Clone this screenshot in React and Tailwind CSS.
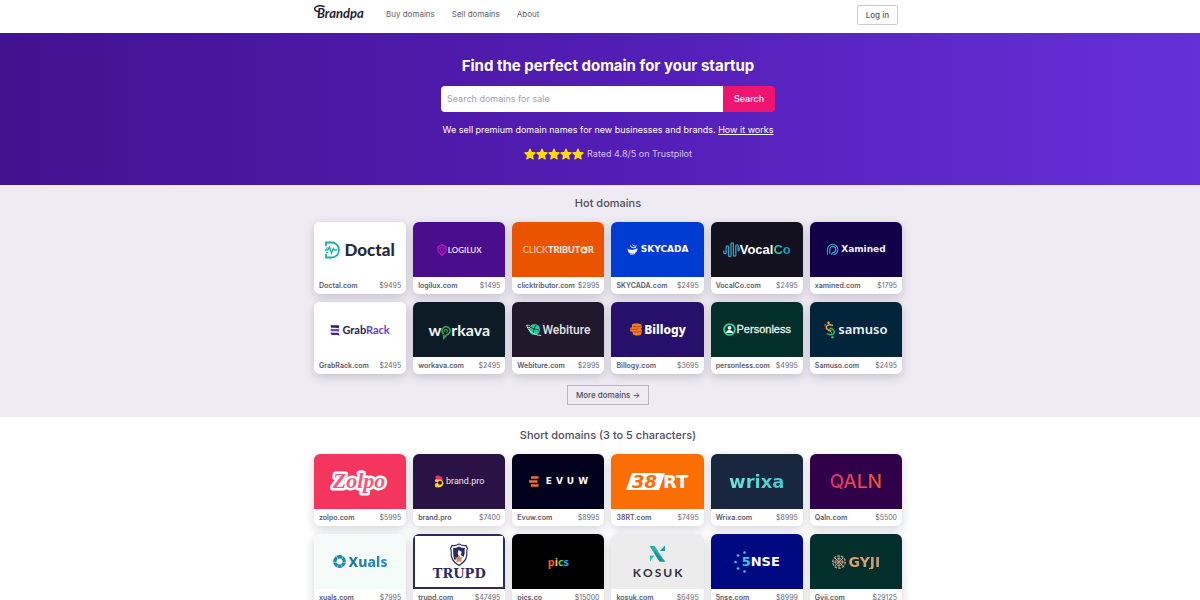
import React from "react";

const container = "mx-auto w-full max-w-[604px] pl-4";

function Star() {
  return (
    <svg viewBox="0 0 24 24" className="size-3" fill="#ffdb0f" stroke="#ffdb0f" strokeWidth="2.2" strokeLinejoin="round" aria-hidden="true">
      <path d="M12 2l3 6.800 7.400.8-5.500 5 1.500 7.300L12 18.200l-6.400 3.700 1.500-7.300-5.500-5 7.400-.8z" />
    </svg>
  );
}

const logos = {
  doctal: (
    <div className="flex items-center gap-[3px]">
      <svg viewBox="0 0 16 18" className="h-[18px] w-4" fill="none" stroke="#1bb0a6" strokeWidth="1.800">
        <path d="M1 5V1.500h5.500a7.500 7.500 0 0 1 0 15H1V13" />
        <path d="M0 9h3l1.500-3 2 6 1.800-4.500 1 1.500H12" strokeWidth="1.300" />
        <path d="M1 7h3M1 11.500h2" strokeWidth="1" />
      </svg>
      <span className="font-['Lato',sans-serif] text-[17px] font-black text-[#262a3c]">Doctal</span>
    </div>
  ),
  logilux: (
    <div className="flex items-center gap-px">
      <svg viewBox="0 0 10 12" className="h-3 w-[10px]" fill="none" stroke="#b31bb4" strokeWidth="1.300">
        <path d="M5 .7l4 2.200v4.400L5 11.300 1 7.300V2.900z" />
        <path d="M3 4l2-1.300L7 4v2.500L5 8 3 6.500zM5 4.500v2M1.500 3.500l2 1M8.500 3.500l-2 1M5 8v3" strokeWidth=".9" />
      </svg>
      <span className="font-['Lato',sans-serif] text-[8px] font-bold text-[#e6d9f5]">LOGILUX</span>
    </div>
  ),
  clicktributor: (
    <div className="flex items-center font-['Lato',sans-serif] text-[9px] text-[#fff0dc]">
      <span className="text-[#ffd9ae]">CLICK</span>
      <span className="font-black">TRIBUT</span>
      <svg viewBox="0 0 8 8" className="size-2" fill="none" stroke="#fff0dc" strokeWidth="1.800">
        <circle cx="4" cy="4" r="2.600" />
        <path d="M3.500 3.500L7.500 0 7 4" fill="#fff0dc" stroke="none" />
      </svg>
      <span className="font-black">R</span>
    </div>
  ),
  skycada: (
    <div className="flex items-center gap-[3px]">
      <svg viewBox="0 0 11 11" className="size-[11px]" fill="none" stroke="#fff" strokeWidth="1">
        <path d="M.5 4.200c1.500 2 5.500 2.200 10 0a5.200 5.200 0 0 1-9.500 3z" fill="#fff" stroke="none" />
        <path d="M1.500 8c2 1.200 6 .8 8-1M2.800 9.800c1.500.8 4 .6 5.500-.8" stroke="#e1ebff" />
        <path d="M3.500 1.500c0 1.500 2 2.700 5.500 2M5.500.5c.3 1.300 2 2 4 1.500" strokeWidth=".9" />
      </svg>
      <span className="font-['DejaVu_Sans',sans-serif] text-[9px] font-bold text-white">SKYCADA</span>
    </div>
  ),
  vocalco: (
    <div className="flex items-center">
      <svg viewBox="0 0 17 16" className="h-4 w-[17px]" fill="none" stroke="#3a9fc0" strokeWidth="1.300" strokeLinecap="round">
        <path d="M.8 9v1.500a1.200 1.200 0 0 0 2.400 0V5a1.200 1.200 0 0 1 2.400 0v8.500a1.200 1.200 0 0 0 2.400 0V2a1.200 1.200 0 0 1 2.400 0v11a1.200 1.200 0 0 0 2.400 0V4a1.200 1.200 0 0 1 2.400 0v5" />
        <path d="M16.300 6v2" />
      </svg>
      <span className="font-['Liberation_Sans',sans-serif] text-[13px] font-bold text-white">
        Vocal<span className="bg-linear-to-r from-[#1de0c0] to-[#1989b8] bg-clip-text text-transparent">Co</span>
      </span>
    </div>
  ),
  xamined: (
    <div className="flex items-center gap-0.5">
      <svg viewBox="0 0 13 13" className="size-[13px]" fill="none" stroke="#3c8cc8" strokeWidth="1.200">
        <path d="M1.500 12V6.500A5.200 5.200 0 1 1 7 11.700" />
        <path d="M3.800 10.500V6.500A3 3 0 1 1 7 9.500L5 11.500" stroke="#2fb1c9" />
      </svg>
      <span className="font-['DejaVu_Sans',sans-serif] text-[9px] font-bold text-[#f1edff]">Xamined</span>
    </div>
  ),
  grabrack: (
    <div className="flex items-center gap-0.5">
      <svg viewBox="0 0 10 12" className="h-3 w-[10px]">
        <path d="M.5.800C3 2 6 .5 9.500 1.800L8.500 4.500C6 3 3 4.500 1 3.500z" fill="#2b2560" />
        <path d="M1 4.600c2.500 1.200 5-.4 8.500.9L8.500 8C6 6.700 3 8 .5 7z" fill="#6a45e0" />
        <path d="M.5 8.200c2.500 1.200 5.500-.3 8.500 1l.5 2.500C6.500 10.300 3 11.600 1 10.500z" fill="#3a2c86" />
      </svg>
      <span className="font-['Lato',sans-serif] text-[11px] font-bold text-[#2a2350]">
        Grab<span className="text-[#6040cf]">Rack</span>
      </span>
    </div>
  ),
  workava: (
    <div className="flex items-center font-['Lato',sans-serif] text-[16px] font-bold text-[#f0f5f4]">
      <span>w</span>
      <svg viewBox="0 0 10 14" className="mt-1.5 h-[14px] w-[10px]" fill="none" stroke="#2ea84f" strokeWidth="1.600">
        <path d="M2.500 7.800A4 4 0 1 1 6 8.600L2.800 12V8.400" />
        <path d="M3.500 6a1.600 1.600 0 1 1 2 .5" strokeWidth="1.100" />
      </svg>
      <span>rkava</span>
    </div>
  ),
  webiture: (
    <div className="flex items-center">
      <svg viewBox="0 0 16 14" className="h-[14px] w-4" fill="none">
        <circle cx="8.500" cy="6.500" r="5.500" fill="#27c79b" />
        <path d="M4 4l4 2 2-4M8 6l-1 5M8 6l5 1" stroke="#1d2b3a" strokeWidth=".9" />
        <path d="M.7 2c1 5 6 10 14.500 10.500" stroke="#d9dbe6" strokeWidth="1" />
        <path d="M.7 2l3 .5M2 4.500l2 0" stroke="#d9dbe6" strokeWidth=".8" />
      </svg>
      <span className="font-['Roboto',sans-serif] text-[12px] font-medium text-[#e6e3ec]">Webiture</span>
    </div>
  ),
  billogy: (
    <div className="flex items-center gap-px">
      <svg viewBox="0 0 14 13" className="h-[13px] w-[14px]" fill="none">
        <path d="M3 1.500C5 0 10 .2 12.500 1.500l.5 3-1 1 1 2-.8 4c-2 1.300-6 1.300-8 0L3.500 9 1 8l.3-3.300 1.700-.5z" fill="#f47a20" />
        <path d="M4 3.200c2 .8 6 .8 8.500 0M1.500 5.800c2 .8 6 .8 8 0M4 8.500c2 .7 5 .7 8 0" stroke="#a6401a" strokeWidth=".8" />
      </svg>
      <span className="font-['Noto_Sans',sans-serif] text-[12px] font-extrabold text-white">Billogy</span>
    </div>
  ),
  personless: (
    <div className="flex items-center gap-px">
      <svg viewBox="0 0 13 13" className="size-[13px]" fill="none">
        <circle cx="6.500" cy="6.500" r="5.400" stroke="#2bd59a" strokeWidth="1.800" />
        <circle cx="6.500" cy="4.800" r="1.900" fill="#fff" />
        <path d="M3 10c0-4 7-4 7 0z" fill="#fff" />
      </svg>
      <span className="font-['Liberation_Sans',sans-serif] text-[11px] text-[#e6f2ee] [-webkit-text-stroke:0.3px_#e6f2ee]">Personless</span>
    </div>
  ),
  samuso: (
    <div className="flex items-center gap-0.5">
      <svg viewBox="0 0 12 18" className="h-[18px] w-3" fill="none" strokeWidth="1.500">
        <path d="M9 4.500C5 2.500 1 5 2.500 7.500 3.500 9 6 9 7 10" stroke="#f09a3a" />
        <path d="M5.500 7C9 7.500 11 10 9.800 12.500 8.500 14.500 5 14 3 12.500" stroke="#35b45c" />
        <path d="M4 9.500c3 .5 4 2 3.500 3" stroke="#8bbf4a" strokeWidth="1" />
        <circle cx="4.500" cy="1.800" r="1.200" fill="#f5c04a" />
        <circle cx="1.200" cy="4" r=".8" fill="#f09a3a" />
        <circle cx="8.500" cy="16.300" r="1.200" fill="#35b45c" />
      </svg>
      <span className="font-['Noto_Sans',sans-serif] text-[13px] font-semibold text-[#f0f5f8]">samuso</span>
    </div>
  ),
  zolpo: (
    <svg viewBox="0 0 60 30" className="h-[30px] w-[60px]" fontFamily="'Liberation Serif', serif" fontWeight="700" fontStyle="italic" fontSize="22" textAnchor="middle" strokeLinejoin="round">
      <text x="29" y="21" fill="#f7577a" stroke="#fff" strokeWidth="5" paintOrder="stroke">Zolpo</text>
    </svg>
  ),
  brandpro: (
    <div className="flex items-center gap-0.5">
      <svg viewBox="0 0 10 13" className="h-[13px] w-[10px]">
        <path d="M1.500 1.500C2.500 0 6 0 8 2.500L9 5H2z" fill="#ef2b63" />
        <path d="M1 4.500h4C8 4 9.800 6.500 9.300 9 8.700 12 5 13 1.200 12L1 8z" fill="#ffd21c" />
        <circle cx="6" cy="7.800" r="2" fill="#2b1245" />
        <path d="M1 6.500l3 1-3 1.200z" fill="#2b1245" />
      </svg>
      <span className="font-['Roboto',sans-serif] text-[9px] text-[#ece6f2]">brand.pro</span>
    </div>
  ),
  evuw: (
    <div className="flex items-center gap-[7px]">
      <svg viewBox="0 0 10 11" className="h-[11px] w-[10px]" stroke="#f4702a" strokeWidth="2.300">
        <path d="M2 1.500h7.500M0 5.500h8.500M2 9.500h7.500" />
      </svg>
      <span className="flex gap-1 font-['DejaVu_Sans',sans-serif] text-[9px] font-bold text-white">
        <span>E</span><span>V</span><span>U</span><span>W</span>
      </span>
    </div>
  ),
  rt38: (
    <svg viewBox="0 0 66 20" className="h-5 w-[66px]">
      <path d="M7 1h33l-6 17H1z" fill="#fff" />
      <g fontFamily="'DejaVu Sans', sans-serif" fontWeight="700" fontSize="18">
        <text x="7" y="16" fill="#fb6d05" fontStyle="italic">38</text>
        <text x="38" y="16" fill="#fff">RT</text>
      </g>
    </svg>
  ),
  wrixa: (
    <span className="bg-linear-to-r from-[#6fe6d8] to-[#45c3cf] bg-clip-text font-['DejaVu_Sans',sans-serif] text-[18px] font-bold text-transparent">wrixa</span>
  ),
  qaln: (
    <span className="bg-linear-to-r from-[#e5286f] to-[#f2582c] bg-clip-text font-['Inter',sans-serif] text-[19px] font-medium text-transparent">QALN</span>
  ),
  xuals: (
    <div className="flex items-center gap-[3px]">
      <svg viewBox="0 0 13 13" className="size-[13px]" fill="none">
        <circle cx="6.500" cy="6.500" r="4.700" stroke="#1f86a8" strokeWidth="3.400" />
        <path d="M3 .500l2 4M10.500 1l-2 3.500M0 7l4 .5M13 7l-4 .5M4 12.500l1.200-3M9.500 12.500l-1.200-3" stroke="#a7dbe2" strokeWidth=".8" />
      </svg>
      <span className="bg-linear-to-r from-[#157a9c] to-[#2c8fc4] bg-clip-text font-['Noto_Sans',sans-serif] text-[14px] font-extrabold text-transparent">Xuals</span>
    </div>
  ),
  trupd: (
    <div className="flex flex-col items-center">
      <svg viewBox="0 0 20 24" className="h-6 w-5" fill="none">
        <path d="M3 2.500Q6.500 3 10 1q3.500 2 7 1.500l1.500 3q-1 2-.7 4c.8 6-2.500 10-7.800 13C4.700 19.500 1.400 15.500 2.200 9.500q.3-2-.7-4z" fill="#fff" stroke="#2c2a63" strokeWidth="1.200" />
        <path d="M4 5q4 0 6-1.500Q12 5 16 5q-.8 2-.3 5l-1 4-3-2 1-3-3-2-1 3 1 3-2 3-2 1C3.500 13 4.500 8 4 5z" fill="#2c2a63" />
        <path d="M10 11.500l1.300 2.800 3 .3-2.200 2 .7 3.200L10 18.200l-2.800 1.600.7-3.200-2.200-2 3-.3z" fill="#d48a5e" />
      </svg>
      <span className="font-['DejaVu_Serif',serif] text-[13px] leading-[14px] font-bold text-[#2c2a63]">TRUPD</span>
    </div>
  ),
  pics: (
    <span className="font-['Noto_Sans',sans-serif] text-[11px] font-bold">
      <span className="text-[#f4553a]">p</span>
      <span className="text-[#f5c33a]">i</span>
      <span className="text-[#57c95a]">c</span>
      <span className="text-[#3aa2e8]">s</span>
    </span>
  ),
  kosuk: (
    <div className="flex flex-col items-center gap-1">
      <svg viewBox="0 0 17 17" className="size-[17px]">
        <path d="M.500 1h5L16 16.500h-5.500z" fill="#2bb1ac" />
        <path d="M.500 1l5 7.500V6L16 16.500h-5.500z" fill="#1b8f99" />
        <path d="M16 .500v5.500L11 6z" fill="#1b9aa0" />
        <path d="M1 10.500h4.500L1 16.500z" fill="#35c0b4" />
      </svg>
      <span className="flex gap-0.5 font-['Lato',sans-serif] text-[12px] leading-[13px] font-bold text-[#2c303a]">
        <span>K</span><span>O</span><span>S</span><span>U</span><span>K</span>
      </span>
    </div>
  ),
  snse: (
    <div className="flex items-center">
      <svg viewBox="0 0 12 22" className="-mr-1 h-[22px] w-3" fill="#37c6e6">
        <circle cx="1.500" cy="11" r="1.300" />
        <circle cx="4" cy="4.500" r="1.300" />
        <circle cx="4" cy="17.500" r="1.300" />
        <circle cx="10.500" cy="1.500" r="1.300" />
        <circle cx="10.500" cy="20.500" r="1.300" />
      </svg>
      <span className="font-['DejaVu_Sans',sans-serif] text-[13px] font-bold text-white"><span className="text-[#37c6e6]">5</span>NSE</span>
    </div>
  ),
  gyji: (
    <div className="flex items-center gap-[3px]">
      <svg viewBox="0 0 14 14" className="size-[14px]" fill="none" stroke="#c4a08a" strokeWidth="1">
        <circle cx="7" cy="7" r="6.200" strokeDasharray="2.600 1.200" strokeWidth="1.300" />
        <circle cx="7" cy="7" r="3.600" />
        <path d="M7 1v12M1 7h12M2.800 2.800l8.400 8.400M11.200 2.800l-8.400 8.400" />
      </svg>
      <span className="bg-linear-to-r from-[#e0a070] to-[#c99a78] bg-clip-text font-['DejaVu_Sans',sans-serif] text-[14px] font-bold text-transparent">GYJI</span>
    </div>
  ),
};

const hot = [
  { name: "Doctal.com", price: 9495, logo: "doctal", bg: "bg-white" },
  { name: "logilux.com", price: 1495, logo: "logilux", bg: "bg-[#4a0d8c]" },
  { name: "clicktributor.com", price: 2995, logo: "clicktributor", bg: "bg-[#ea5400]" },
  { name: "SKYCADA.com", price: 2495, logo: "skycada", bg: "bg-[#003bd2]" },
  { name: "VocalCo.com", price: 2495, logo: "vocalco", bg: "bg-[#12111d]" },
  { name: "xamined.com", price: 1795, logo: "xamined", bg: "bg-[#120049]" },
  { name: "GrabRack.com", price: 2495, logo: "grabrack", bg: "bg-white" },
  { name: "workava.com", price: 2495, logo: "workava", bg: "bg-[#0d1b26]" },
  { name: "Webiture.com", price: 2995, logo: "webiture", bg: "bg-[#21182b]" },
  { name: "Billogy.com", price: 3695, logo: "billogy", bg: "bg-[#27106b]" },
  { name: "personless.com", price: 4995, logo: "personless", bg: "bg-[#032f2b]" },
  { name: "Samuso.com", price: 2495, logo: "samuso", bg: "bg-[#03253c]" },
];

const short = [
  { name: "zolpo.com", price: 5995, logo: "zolpo", bg: "bg-[#f4365f]" },
  { name: "brand.pro", price: 7400, logo: "brandpro", bg: "bg-[#2b1245]" },
  { name: "Evuw.com", price: 8995, logo: "evuw", bg: "bg-[#02001c]" },
  { name: "38RT.com", price: 7495, logo: "rt38", bg: "bg-[#fb6d05]" },
  { name: "Wrixa.com", price: 8995, logo: "wrixa", bg: "bg-[#18273d]" },
  { name: "Qaln.com", price: 5500, logo: "qaln", bg: "bg-[#300048]" },
  { name: "xuals.com", price: 7995, logo: "xuals", bg: "bg-[#f4fbf8]" },
  { name: "trupd.com", price: 47495, logo: "trupd", bg: "border-2 border-[#2c2a63] bg-white" },
  { name: "pics.co", price: 15000, logo: "pics", bg: "bg-black" },
  { name: "kosuk.com", price: 6495, logo: "kosuk", bg: "bg-[#ececed]" },
  { name: "5nse.com", price: 8999, logo: "snse", bg: "bg-[#000a80]" },
  { name: "Gyji.com", price: 29125, logo: "gyji", bg: "bg-[#032f2b]" },
];

function DomainCard({ name, price, logo, bg }) {
  return (
    <li>
      <a href={"#" + name} className="block overflow-hidden rounded-md bg-white shadow-[0_3px_10px_rgba(40,30,60,0.2)]">
        <div className={"flex h-[55px] items-center justify-center overflow-hidden leading-none whitespace-nowrap " + bg}>
          {logos[logo]}
        </div>
        <div className="flex h-[17px] items-center justify-between px-[5px] pt-px text-[7px] whitespace-nowrap">
          <span className="font-semibold text-[#5a5866]">{name}</span>
          <span className="text-[#6c6a77]">${price}</span>
        </div>
      </a>
    </li>
  );
}

function DomainGrid({ title, domains }) {
  return (
    <>
      <h2 className="mb-3 text-center text-[11px] leading-[13px] font-medium text-[#4f4b5c]">{title}</h2>
      <ul className="grid grid-cols-3 gap-x-[7px] gap-y-2 sm:grid-cols-6">
        {domains.map((d) => (
          <DomainCard key={d.name} {...d} />
        ))}
      </ul>
    </>
  );
}

export default function App() {
  return (
    <div className="bg-white font-['Inter',sans-serif]">
      <header className={container + " flex h-[33px] items-start justify-between"}>
        <div className="flex items-center">
          <a href="#home" className="flex h-7 items-center">
            <svg viewBox="0 0 52 22" className="h-[22px] w-[52px]" fill="none">
              <path d="M4 8.500C.5 8-.2 5.500 1.800 4 4 2.600 7 2.500 10 3.500" stroke="#1d1d35" strokeWidth="1.400" strokeLinecap="round" />
              <text x="3" y="15" fill="#1d1d35" fontFamily="'Lato', sans-serif" fontStyle="italic" fontWeight="700" fontSize="13">Brandpa</text>
            </svg>
          </a>
          <nav className="ml-5 flex gap-[17px] text-[8px] text-[#5f5e68]">
            <a href="#buy">Buy domains</a>
            <a href="#sell">Sell domains</a>
            <a href="#about">About</a>
          </nav>
        </div>
        <button type="button" className="mt-[5px] mr-1 h-5 rounded-xs border border-[#cccbd3] px-2 text-[8px] font-medium text-[#555463]">
          Log in
        </button>
      </header>

      <main>
        <section className="bg-linear-to-r from-[#43128f] via-[#521db4] to-[#6630d9]">
          <div className={container + " flex flex-col items-center pt-[23px] pb-[25px] text-white"}>
            <h1 className="text-[15px] leading-5 font-bold">Find the perfect domain for your startup</h1>
            <form className="mt-[10px] flex h-[26px] w-full max-w-[334px] overflow-hidden rounded-[4px]" onSubmit={(e) => e.preventDefault()}>
              <input
                type="search"
                aria-label="Search domains for sale"
                placeholder="Search domains for sale"
                className="min-w-0 flex-1 bg-white px-1.5 text-[9px] text-[#333] outline-none placeholder:text-[#a3a2aa]"
              />
              <button type="submit" className="w-[52px] bg-[#ee1570] text-[9px] font-medium">
                Search
              </button>
            </form>
            <p className="mt-3 text-[9px] leading-3">
              We sell premium domain names for new businesses and brands.{" "}
              <a href="#how" className="underline">How it works</a>
            </p>
            <div className="mt-3 flex h-3 items-center gap-[3px] text-[9px] leading-3 text-[#d3c3f2]">
              <span className="flex">
                <Star /><Star /><Star /><Star /><Star />
              </span>
              <span>Rated 4.8/5 on Trustpilot</span>
            </div>
          </div>
        </section>

        <section className="bg-[#eeebf3] py-3">
          <div className={container}>
            <DomainGrid title="Hot domains" domains={hot} />
            <div className="mt-[11px] flex justify-center">
              <button type="button" className="h-5 border border-[#b9b6c1] px-2 text-[8px] font-medium text-[#4c4a58]">
                More domains →
              </button>
            </div>
          </div>
        </section>

        <section className="py-3">
          <div className={container}>
            <DomainGrid title="Short domains (3 to 5 characters)" domains={short} />
          </div>
        </section>
      </main>
    </div>
  );
}
